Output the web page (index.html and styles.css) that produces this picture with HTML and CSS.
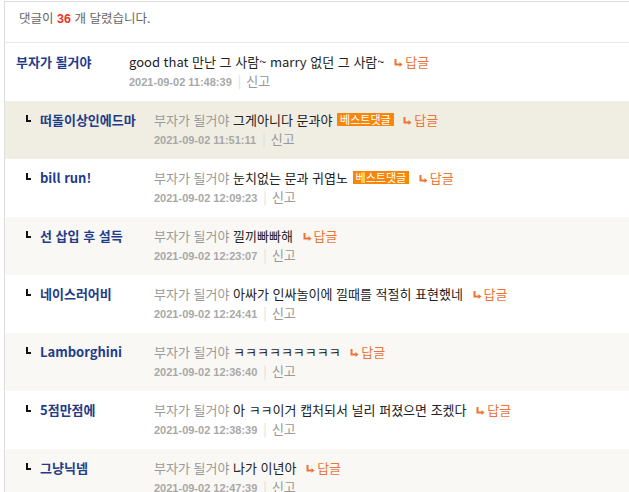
FILE: index.html
```html
<!DOCTYPE html>
<html lang="ko">
  <head>
    <meta charset="UTF-8" />
    <meta name="viewport" content="width=device-width, initial-scale=1.0" />
    <title>댓글</title>
    <link rel="stylesheet" href="styles.css">
  </head>

  <body>
    <div class="comments">
      <p class="count">댓글이 <b>36</b> 개 달렸습니다.</p>

      <div class="comment">
        <span class="name">부자가 될거야</span>
        <div class="body">
          <p class="text">good that 만난 그 사람~ marry 없던 그 사람~ <a class="reply"><svg viewBox="0 0 9 8"><path d="M1.5 0v5.5h5" /><path d="M5.5 3l3 2.5-3 2.5z" /></svg>답글</a></p>
          <p class="meta"><span class="date">2021-09-02 11:48:39</span><span class="bar">|</span>신고</p>
        </div>
      </div>

      <div class="comment sub best">
        <i class="mark"></i>
        <span class="name">떠돌이상인에드마</span>
        <div class="body">
          <p class="text"><span class="to">부자가 될거야</span> 그게아니다 문과야 <em class="badge">베스트댓글</em> <a class="reply"><svg viewBox="0 0 9 8"><path d="M1.5 0v5.5h5" /><path d="M5.5 3l3 2.5-3 2.5z" /></svg>답글</a></p>
          <p class="meta"><span class="date">2021-09-02 11:51:11</span><span class="bar">|</span>신고</p>
        </div>
      </div>

      <div class="comment sub">
        <i class="mark"></i>
        <span class="name">bill run!</span>
        <div class="body">
          <p class="text"><span class="to">부자가 될거야</span> 눈치없는 문과 귀엽노 <em class="badge">베스트댓글</em> <a class="reply"><svg viewBox="0 0 9 8"><path d="M1.5 0v5.5h5" /><path d="M5.5 3l3 2.5-3 2.5z" /></svg>답글</a></p>
          <p class="meta"><span class="date">2021-09-02 12:09:23</span><span class="bar">|</span>신고</p>
        </div>
      </div>

      <div class="comment sub alt">
        <i class="mark"></i>
        <span class="name">선 삽입 후 설득</span>
        <div class="body">
          <p class="text"><span class="to">부자가 될거야</span> 낄끼빠빠해 <a class="reply"><svg viewBox="0 0 9 8"><path d="M1.5 0v5.5h5" /><path d="M5.5 3l3 2.5-3 2.5z" /></svg>답글</a></p>
          <p class="meta"><span class="date">2021-09-02 12:23:07</span><span class="bar">|</span>신고</p>
        </div>
      </div>

      <div class="comment sub">
        <i class="mark"></i>
        <span class="name">네이스러어비</span>
        <div class="body">
          <p class="text"><span class="to">부자가 될거야</span> 아싸가 인싸놀이에 낄때를 적절히 표현했네 <a class="reply"><svg viewBox="0 0 9 8"><path d="M1.5 0v5.5h5" /><path d="M5.5 3l3 2.5-3 2.5z" /></svg>답글</a></p>
          <p class="meta"><span class="date">2021-09-02 12:24:41</span><span class="bar">|</span>신고</p>
        </div>
      </div>

      <div class="comment sub alt">
        <i class="mark"></i>
        <span class="name">Lamborghini</span>
        <div class="body">
          <p class="text"><span class="to">부자가 될거야</span> ㅋㅋㅋㅋㅋㅋㅋㅋㅋ <a class="reply"><svg viewBox="0 0 9 8"><path d="M1.5 0v5.5h5" /><path d="M5.5 3l3 2.5-3 2.5z" /></svg>답글</a></p>
          <p class="meta"><span class="date">2021-09-02 12:36:40</span><span class="bar">|</span>신고</p>
        </div>
      </div>

      <div class="comment sub">
        <i class="mark"></i>
        <span class="name">5점만점에</span>
        <div class="body">
          <p class="text"><span class="to">부자가 될거야</span> 아 ㅋㅋ이거 캡처되서 널리 퍼졌으면 조켔다 <a class="reply"><svg viewBox="0 0 9 8"><path d="M1.5 0v5.5h5" /><path d="M5.5 3l3 2.5-3 2.5z" /></svg>답글</a></p>
          <p class="meta"><span class="date">2021-09-02 12:38:39</span><span class="bar">|</span>신고</p>
        </div>
      </div>

      <div class="comment sub alt">
        <i class="mark"></i>
        <span class="name">그냥닉넴</span>
        <div class="body">
          <p class="text"><span class="to">부자가 될거야</span> 나가 이년아 <a class="reply"><svg viewBox="0 0 9 8"><path d="M1.5 0v5.5h5" /><path d="M5.5 3l3 2.5-3 2.5z" /></svg>답글</a></p>
          <p class="meta"><span class="date">2021-09-02 12:47:39</span><span class="bar">|</span>신고</p>
        </div>
      </div>
    </div>
  </body>
</html>
```

FILE: styles.css
```css
html,
body {
  margin: 0;
  padding: 0;
  background: #fff;
}

body {
  font-family: "Noto Sans CJK KR", "Noto Sans", sans-serif;
  font-size: 13px;
  line-height: 18px;
  color: #222;
}

p {
  margin: 0;
}

.comments {
  margin: 1px 0 0 4px;
  border-top: 1px solid #ddd;
  border-left: 1px solid #ddd;
}

.count {
  padding: 7px 0 14px 14px;
  font-size: 12.5px;
  color: #666;
  border-bottom: 1px solid #e8e8e8;
}

.count b {
  color: #ee3322;
  font-family: "Liberation Sans", sans-serif;
}

.comment {
  display: flex;
  align-items: flex-start;
  height: 58px;
  box-sizing: border-box;
  padding: 10px 0 0 11px;
}

.comment.sub {
  padding-left: 21px;
}

.comment.best {
  background: #f0ede3;
}

.comment.alt {
  background: #f9f8f5;
}

.mark {
  flex: none;
  width: 3px;
  height: 5px;
  margin: 4px 9px 0 0;
  border-left: 2px solid #111;
  border-bottom: 2px solid #111;
}

.name {
  flex: none;
  width: 113px;
  font-weight: bold;
  color: #1f3c8a;
}

.sub .name {
  width: 114px;
}

.to {
  color: #999;
}

.badge {
  font-style: normal;
  font-size: 11px;
  line-height: 13px;
  display: inline-block;
  padding: 0 3px;
  margin-left: 1px;
  background: #f7860c;
  color: #fff;
  vertical-align: 1px;
}

.reply {
  margin-left: 6px;
  color: #ec7436;
}

.reply svg {
  width: 9px;
  height: 8px;
  margin-right: 2px;
  vertical-align: 0;
}

.reply svg path {
  fill: none;
  stroke: #ec7436;
  stroke-width: 2;
}

.reply svg path + path {
  fill: #ec7436;
  stroke: none;
}

.meta {
  color: #999;
  margin-top: 1px;
}

.date {
  font-family: "Liberation Sans", sans-serif;
  font-size: 11px;
  font-weight: bold;
  color: #a8a8a8;
}

.bar {
  color: #ddd;
  margin: 0 5px 0 6px;
}
```
